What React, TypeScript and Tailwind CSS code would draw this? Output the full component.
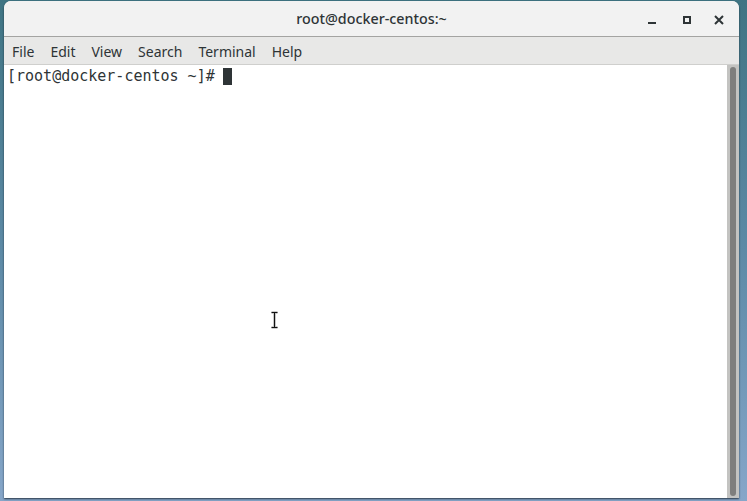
import React from 'react';

const menus = ['File', 'Edit', 'View', 'Search', 'Terminal', 'Help'];

export default function App() {
  return (
    <div className="relative w-[747px] h-[501px] overflow-hidden bg-gradient-to-b from-[#3f7483] via-[#5d8aa6] to-[#86a6c9] pt-[1px] pl-[4px]">
      {/* Window */}
      <div className="flex flex-col w-[735px] h-[497px] rounded-t-[7px] overflow-hidden bg-white shadow-[0_1px_2px_rgba(20,30,40,0.8)]">
        {/* Title bar */}
        <div className="relative flex items-center justify-center h-[36px] bg-[#f2f2f2] border-b border-[#a4a4a2] shrink-0">
          <span className="text-[14.3px] font-medium text-[#2e3436] font-['Noto_Sans',sans-serif]">
            root@docker-centos:~
          </span>
          <div className="absolute right-0 top-0 flex items-center h-full">
            <button className="flex items-center justify-center w-[38px] h-full">
              <span className="block w-[8px] h-[2px] mt-[8px] bg-[#2e3436]" />
            </button>
            <button className="flex items-center justify-center w-[32px] h-full">
              <span className="block w-[8px] h-[8px] mt-[2px] border-2 border-[#2e3436]" />
            </button>
            <button className="flex items-center justify-center w-[32px] h-full mr-[4px]">
              <svg width="10" height="10" viewBox="0 0 10 10" className="mt-[2px]">
                <path d="M1 1 L9 9 M9 1 L1 9" stroke="#2e3436" strokeWidth="2" />
              </svg>
            </button>
          </div>
        </div>

        {/* Menu bar */}
        <div className="flex items-center h-[28px] bg-[#e8e8e7] border-b border-[#cfcfcd] pl-[4px] pt-[2px] shrink-0 font-['Noto_Sans',sans-serif] text-[14px] text-[#2e3436]">
          {menus.map((m) => (
            <span key={m} className="px-[4px] mr-[8px]">{m}</span>
          ))}
        </div>

        {/* Terminal body */}
        <div className="flex flex-1 min-h-0">
          <div className="flex-1 pl-[3px] pt-[2px] font-['DejaVu_Sans_Mono',monospace] text-[15px] leading-[18px] text-[#2e3436] whitespace-pre">
            <div className="flex items-center">
              <span>[root@docker-centos ~]#</span>
              <span className="inline-block w-[9px] h-[17px] ml-[8px] bg-[#2e3436]" />
            </div>
          </div>
          <div className="w-[12px] bg-[#c3c3c1] flex justify-center py-[2px] shrink-0">
            <div className="w-[6px] h-full rounded-full bg-[#7e7e7d]" />
          </div>
        </div>
      </div>

      {/* mouse I-beam */}
      <svg className="absolute left-[270px] top-[311px]" width="9" height="18" viewBox="0 0 9 18">
        <path d="M1.5 1.5 H7.5 M4.5 1.5 V16.5 M1.5 16.5 H7.5" stroke="#bbb" strokeWidth="2.6" fill="none" />
        <path d="M1.5 1.5 H7.5 M4.5 1.5 V16.5 M1.5 16.5 H7.5" stroke="#111" strokeWidth="1" fill="none" />
      </svg>
    </div>
  );
}
